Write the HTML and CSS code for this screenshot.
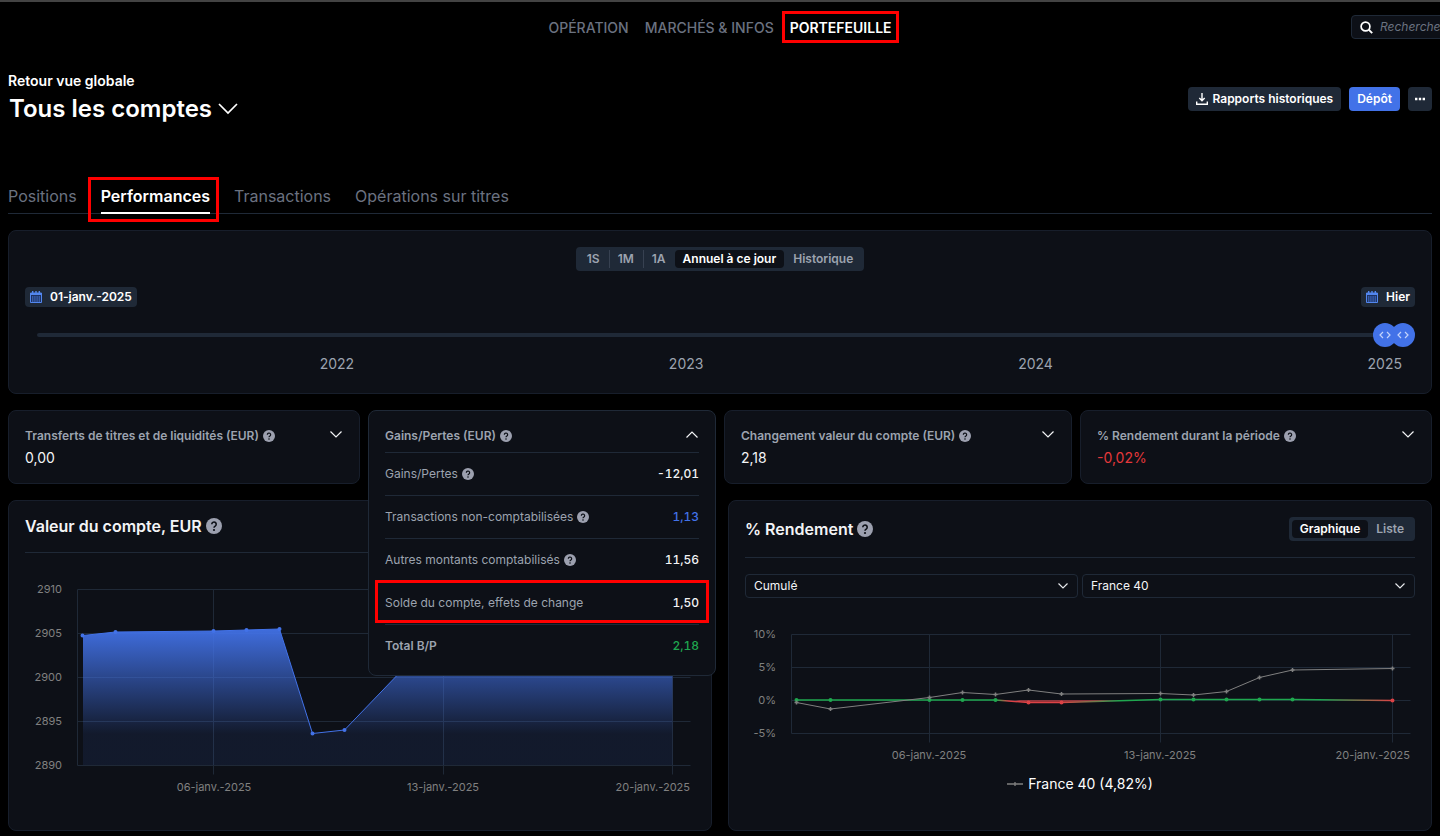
FILE: index.html
```html
<!DOCTYPE html>
<html lang="fr">
<head>
    <meta charset="UTF-8">
    <meta name="viewport" content="width=device-width, initial-scale=1">
    <title>Portefeuille - Performances</title>
    <link rel="stylesheet" href="styles.css">
</head>
<body>
<!-- icônes -->
<svg class="sprite" aria-hidden="true">
    <symbol id="i-help" viewBox="0 0 16 16">
        <circle cx="8" cy="8" r="8" fill="#9ca0af"/>
        <path d="M5.8 6.3a2.2 2.2 0 1 1 3.4 1.8c-.8.5-1.2.8-1.2 1.7" fill="none" stroke="#0d1017" stroke-width="1.6"/>
        <circle cx="8" cy="12" r="1.1" fill="#0d1017"/>
    </symbol>
    <symbol id="i-down" viewBox="0 0 12 7">
        <path d="M.5.5 6 6 11.5.5" fill="none" stroke="currentColor" stroke-width="1.2"/>
    </symbol>
    <symbol id="i-up" viewBox="0 0 12 7">
        <path d="M.5 6.5 6 1l5.5 5.5" fill="none" stroke="currentColor" stroke-width="1.2"/>
    </symbol>
    <symbol id="i-calendar" viewBox="0 0 12 12">
        <path d="M.5 2h11v9.5H.5z" fill="#1d3263" stroke="#5286ee"/>
        <path d="M0 2h12v2H0zM2 0h1.4v3H2zM5.3 0h1.4v3H5.3zM8.6 0H10v3H8.6z" fill="#5286ee"/>
        <path d="M2 6h8M2 8h8M2 10h8" stroke="#5286ee" stroke-width="1.2" stroke-dasharray="1.4 .8"/>
    </symbol>
</svg>

<header class="topbar">
    <nav class="mainnav">
        <a href="#">OPÉRATION</a>
        <a href="#">MARCHÉS &amp; INFOS</a>
        <a href="#" class="active marked">PORTEFEUILLE</a>
    </nav>
    <label class="search">
        <svg width="13" height="13" viewBox="0 0 13 13"><circle cx="5.5" cy="5.5" r="4.4" fill="none" stroke="#fff" stroke-width="1.7"/><path d="m8.7 8.7 3.5 3.5" stroke="#fff" stroke-width="1.9"/></svg>
        <input type="search" placeholder="Rechercher" aria-label="Rechercher">
    </label>
</header>

<main class="page">
    <div class="heading">
        <div>
            <a href="#" class="back">Retour vue globale</a>
            <h1><button type="button" class="account">Tous les comptes <svg width="20" height="12" viewBox="0 0 20 12"><path d="m1 1 9 9 9-9" fill="none" stroke="#fff" stroke-width="1.7"/></svg></button></h1>
        </div>
        <div class="actions">
            <button type="button" class="btn">
                <svg width="12" height="12" viewBox="0 0 12 12"><path d="M6 0v7.5M3.3 5 6 7.7 8.7 5M.7 8.5v2.8h10.6V8.5" fill="none" stroke="#fff" stroke-width="1.4"/></svg>
                Rapports historiques
            </button>
            <button type="button" class="btn primary">Dépôt</button>
            <button type="button" class="btn more" aria-label="Plus">
                <svg width="10" height="4" viewBox="0 0 10 4"><path d="M0 .8h2.4v2.4H0zM3.8.8h2.4v2.4H3.8zM7.6.8H10v2.4H7.6z" fill="#fff"/></svg>
            </button>
        </div>
    </div>

    <nav class="tabs">
        <a href="#">Positions</a>
        <a href="#" class="active marked">Performances</a>
        <a href="#">Transactions</a>
        <a href="#">Opérations sur titres</a>
    </nav>

    <!-- période -->
    <section class="card period">
        <div class="segmented durations">
            <button type="button">1S</button>
            <button type="button">1M</button>
            <button type="button">1A</button>
            <button type="button" class="on">Annuel à ce jour</button>
            <button type="button">Historique</button>
        </div>
        <div class="dates">
            <button type="button" class="date"><svg width="12" height="12"><use href="#i-calendar"/></svg>01-janv.-2025</button>
            <button type="button" class="date"><svg width="12" height="12"><use href="#i-calendar"/></svg>Hier</button>
        </div>
        <div class="range">
            <span class="track"></span>
            <input type="range" min="0" max="100" step="0.1" value="98.7" aria-label="Début">
            <input type="range" min="0" max="100" step="0.1" value="100" aria-label="Fin">
        </div>
        <div class="years"><span>2022</span><span>2023</span><span>2024</span><span>2025</span></div>
    </section>

    <!-- résumé -->
    <section class="summary">
        <div class="card stat">
            <div class="stat-head">
                <h3>Transferts de titres et de liquidités (EUR)</h3>
                <button type="button" class="help" aria-label="Aide"><svg width="12" height="12"><use href="#i-help"/></svg></button>
                <button type="button" class="toggle" aria-label="Ouvrir"><svg width="12" height="7"><use href="#i-down"/></svg></button>
            </div>
            <p class="value">0,00</p>
        </div>
        <div class="slot">
            <div class="card stat open">
                <div class="stat-head">
                    <h3>Gains/Pertes (EUR)</h3>
                    <button type="button" class="help" aria-label="Aide"><svg width="12" height="12"><use href="#i-help"/></svg></button>
                    <button type="button" class="toggle" aria-label="Fermer"><svg width="12" height="7"><use href="#i-up"/></svg></button>
                </div>
                <dl class="details">
                    <div>
                        <dt>Gains/Pertes</dt>
                        <button type="button" class="help" aria-label="Aide"><svg width="12" height="12"><use href="#i-help"/></svg></button>
                        <dd>-12,01</dd>
                    </div>
                    <div>
                        <dt>Transactions non-comptabilisées</dt>
                        <button type="button" class="help" aria-label="Aide"><svg width="12" height="12"><use href="#i-help"/></svg></button>
                        <dd class="blue">1,13</dd>
                    </div>
                    <div>
                        <dt>Autres montants comptabilisés</dt>
                        <button type="button" class="help" aria-label="Aide"><svg width="12" height="12"><use href="#i-help"/></svg></button>
                        <dd>11,56</dd>
                    </div>
                    <div class="marked">
                        <dt>Solde du compte, effets de change</dt>
                        <dd>1,50</dd>
                    </div>
                    <div class="total">
                        <dt>Total B/P</dt>
                        <dd class="green">2,18</dd>
                    </div>
                </dl>
            </div>
        </div>
        <div class="card stat">
            <div class="stat-head">
                <h3>Changement valeur du compte (EUR)</h3>
                <button type="button" class="help" aria-label="Aide"><svg width="12" height="12"><use href="#i-help"/></svg></button>
                <button type="button" class="toggle" aria-label="Ouvrir"><svg width="12" height="7"><use href="#i-down"/></svg></button>
            </div>
            <p class="value">2,18</p>
        </div>
        <div class="card stat">
            <div class="stat-head">
                <h3>% Rendement durant la période</h3>
                <button type="button" class="help" aria-label="Aide"><svg width="12" height="12"><use href="#i-help"/></svg></button>
                <button type="button" class="toggle" aria-label="Ouvrir"><svg width="12" height="7"><use href="#i-down"/></svg></button>
            </div>
            <p class="value red">-0,02%</p>
        </div>
    </section>

    <!-- graphiques -->
    <section class="charts">
        <div class="card chart">
            <div class="chart-head short">
                <h2>Valeur du compte, EUR</h2>
                <button type="button" class="help" aria-label="Aide"><svg width="16" height="16"><use href="#i-help"/></svg></button>
            </div>
            <svg class="plot" viewBox="0 0 670 247" role="img" aria-label="Valeur du compte">
                <defs>
                    <linearGradient id="fill" gradientUnits="userSpaceOnUse" x1="0" y1="76" x2="0" y2="181">
                        <stop offset="0" stop-color="#4272e8" stop-opacity=".95"/>
                        <stop offset="1" stop-color="#4272e8" stop-opacity=".1"/>
                    </linearGradient>
                </defs>
                <path class="grid" d="M52.5 36.5h613M52.5 80.5h613M52.5 124.5h613M52.5 168.5h613M52.5 212.5h613M52.5 36.5v176M188.5 36.5v185M418.5 36.5v185M647.5 36.5v185"/>
                <path d="M58 82.5 90.5 79 188.5 78 221.5 77 254.5 76 287.5 180.5 319.5 177 418.5 74 647.5 76V212H58z" fill="url(#fill)"/>
                <path class="value-line" d="M58 82.5 90.5 79 188.5 78 221.5 77 254.5 76 287.5 180.5 319.5 177 418.5 74 647.5 76"/>
                <path class="value-dots" d="M57.5 82.5h0M90.5 79h0M188.5 78h0M221.5 77h0M254.5 76h0M287.5 180.5h0M319.5 177h0"/>
                <g class="axis end">
                    <text x="37" y="40">2910</text>
                    <text x="37" y="84">2905</text>
                    <text x="37" y="128">2900</text>
                    <text x="37" y="172">2895</text>
                    <text x="37" y="216">2890</text>
                    <text x="665" y="238">20-janv.-2025</text>
                </g>
                <g class="axis middle">
                    <text x="189" y="238">06-janv.-2025</text>
                    <text x="418" y="238">13-janv.-2025</text>
                </g>
            </svg>
        </div>

        <div class="card chart">
            <div class="chart-head">
                <h2>% Rendement</h2>
                <button type="button" class="help" aria-label="Aide"><svg width="16" height="16"><use href="#i-help"/></svg></button>
                <div class="segmented">
                    <button type="button" class="on">Graphique</button>
                    <button type="button">Liste</button>
                </div>
            </div>
            <div class="selects">
                <select aria-label="Type"><option>Cumulé</option></select>
                <select aria-label="Indice"><option>France 40</option></select>
            </div>
            <svg class="plot" viewBox="0 0 670 168" role="img" aria-label="Rendement">
                <defs>
                    <linearGradient id="to-red"><stop offset="0" stop-color="#1fa74f"/><stop offset=".4" stop-color="#dc4246"/></linearGradient>
                    <linearGradient id="to-green"><stop offset="0" stop-color="#dc4246"/><stop offset=".6" stop-color="#1fa74f"/></linearGradient>
                    <linearGradient id="late-red"><stop offset=".3" stop-color="#1fa74f"/><stop offset="1" stop-color="#dc4246"/></linearGradient>
                </defs>
                <path class="grid" d="M46.5 36.5h619M46.5 69.5h619M46.5 102.5h619M46.5 135.5h619M46.5 36.5v99M184.5 36.5v108M415.5 36.5v108M647.5 36.5v108"/>
                <path class="gain" d="M51.5 102h199M415.5 101.5h132"/>
                <path d="M250 102h20l13 3h33l60-3z" fill="#dc4246" opacity=".6"/>
                <path d="M250.5 102 283.5 104.5" stroke="url(#to-red)" stroke-width="1.5"/>
                <path class="loss" d="M283.5 104.5h33"/>
                <path d="M316.5 104.5 415.5 101.5" stroke="url(#to-green)" stroke-width="1.5"/>
                <path d="M547.5 101.5 647.5 102.5" stroke="url(#late-red)" stroke-width="1.5"/>
                <path class="gain-dots" d="M51.5 102h0M85.5 102h0M184.5 102h0M217.5 102h0M250.5 102h0M415.5 101.5h0M448.5 101.5h0M481.5 101.5h0M514.5 101.5h0M547.5 101.5h0"/>
                <path class="loss-dots" d="M283.5 104.5h0M316.5 104.5h0M647.5 102.5h0"/>
                <path class="index" d="M51.5 104.5 85.5 111 184.5 99.5 217.5 94.5 250.5 96.5 283.5 92 316.5 96 415.5 95.5 448.5 97 481.5 93.5 514.5 79.5 547.5 72 647.5 70.5"/>
                <path class="index points" d="M49.5 104.5h4m-2-2v4M83.5 111h4m-2-2v4M182.5 99.5h4m-2-2v4M215.5 94.5h4m-2-2v4M248.5 96.5h4m-2-2v4M281.5 92h4m-2-2v4M314.5 96h4m-2-2v4M413.5 95.5h4m-2-2v4M446.5 97h4m-2-2v4M479.5 93.5h4m-2-2v4M512.5 79.5h4m-2-2v4M545.5 72h4m-2-2v4M645.5 70.5h4m-2-2v4"/>
                <g class="axis end">
                    <text x="31" y="40">10%</text>
                    <text x="31" y="73">5%</text>
                    <text x="31" y="106">0%</text>
                    <text x="31" y="139">-5%</text>
                    <text x="665" y="161">20-janv.-2025</text>
                </g>
                <g class="axis middle">
                    <text x="184" y="161">06-janv.-2025</text>
                    <text x="415" y="161">13-janv.-2025</text>
                </g>
            </svg>
            <p class="legend">
                <svg width="16" height="6" viewBox="0 0 16 6"><path d="M0 3h16M6 3h4M8 1v4" stroke="#808080" stroke-width="1.3"/></svg>
                France 40 (4,82%)
            </p>
        </div>
    </section>
</main>
</body>
</html>
```
FILE: styles.css
```css
* {
    box-sizing: border-box;
}

body {
    margin: 0;
    border-top: 2px solid #434343;
    background: #000;
    color: #f3f4f6;
    font-family: Inter, "Liberation Sans", sans-serif;
    font-size: 12px;
    line-height: 18px;
}

h1, h2, h3, p, dl, dd {
    margin: 0;
}

a {
    color: inherit;
    text-decoration: none;
}

button, input, select {
    margin: 0;
    padding: 0;
    border: 0;
    background: none;
    color: inherit;
    font: inherit;
}

button {
    display: inline-flex;
    align-items: center;
    justify-content: center;
    cursor: pointer;
}

svg {
    display: block;
    flex: none;
}

.sprite {
    position: absolute;
    width: 0;
    height: 0;
}

/* cadre rouge */
.marked {
    position: relative;
}

.marked::before {
    content: "";
    position: absolute;
    inset: -8px -7px -6px -8px;
    border: 3px solid #f00;
    pointer-events: none;
}

/* barre du haut */
.topbar {
    display: grid;
    grid-template-columns: 1fr auto 1fr;
    align-items: center;
    height: 50px;
    overflow: hidden;
}

.mainnav {
    display: flex;
    grid-column: 2;
    gap: 16px;
    padding-top: 2px;
    color: #6b7280;
    font-size: 14px;
    font-weight: 500;
}

.mainnav .active {
    color: #fff;
    font-weight: 600;
}

.search {
    display: flex;
    align-items: center;
    justify-self: end;
    gap: 7px;
    width: 160px;
    height: 24px;
    margin-right: -71px;
    padding-left: 8px;
    border: 1px solid #1f2937;
    border-radius: 4px;
    background: #0d1017;
}

.search input {
    width: 110px;
    outline: 0;
}

.search input::placeholder {
    color: #6b7280;
    font-style: italic;
}

.page {
    padding: 0 8px 5px;
}

/* titre */
.heading {
    display: flex;
    justify-content: space-between;
    padding-top: 20px;
}

.back {
    display: block;
    font-size: 14px;
    font-weight: 600;
    color: #fff;
}

h1 {
    padding-top: 1px;
    line-height: 36px;
}

.account {
    gap: 6px;
    padding-left: 1px;
    color: #fff;
    font-size: 24px;
    font-weight: 600;
    line-height: 36px;
}

.actions {
    display: flex;
    gap: 8px;
    padding-top: 15px;
}

.btn {
    gap: 4px;
    height: 24px;
    padding: 0 8px;
    border-radius: 4px;
    background: #1f2937;
    color: #fff;
    font-weight: 600;
}

.btn.primary {
    background: #4272e8;
}

.btn.more {
    width: 24px;
    padding: 0;
}

/* onglets */
.tabs {
    display: flex;
    gap: 24px;
    margin-top: 56px;
    border-bottom: 1px solid #1f2937;
    color: #6b7280;
    font-size: 16px;
    line-height: 26px;
}

.tabs a {
    padding-bottom: 3px;
}

.tabs .active {
    margin-bottom: -1px;
    border-bottom: 2px solid #fff;
    color: #fff;
    font-weight: 600;
}

.tabs .marked::before {
    inset: -6px -9px -10px -13px;
}

.card {
    border: 1px solid #171e2b;
    border-radius: 8px;
    background: #0d1017;
}

/* periode */
.period {
    display: flex;
    flex-direction: column;
    margin-top: 16px;
    padding: 16px 16px 20px;
}

.segmented {
    display: flex;
    align-self: center;
    align-items: center;
    height: 24px;
    padding: 3px;
    border-radius: 4px;
    background: #1f2937;
    color: #9ca3af;
    font-weight: 600;
}

.segmented button {
    height: 18px;
    padding: 0 8px;
}

.segmented .on {
    border-radius: 4px;
    background: #0d1017;
    color: #fff;
}

.durations {
    gap: 1px;
}

.durations button:nth-child(2),
.durations button:nth-child(3) {
    border-left: 1px solid #374151;
}

.dates {
    display: flex;
    justify-content: space-between;
    margin-top: 16px;
}

.date {
    gap: 8px;
    height: 20px;
    padding: 0 5px;
    border-radius: 4px;
    background: #1f2937;
    color: #fff;
    font-weight: 600;
}

.range {
    display: grid;
    align-items: center;
    margin-top: 16px;
}

.range > * {
    grid-area: 1 / 1;
}

.track {
    height: 4px;
    margin: 0 12px;
    border-radius: 2px;
    background: #1f2937;
}

.range input {
    width: 100%;
    height: 24px;
    appearance: none;
    pointer-events: none;
}

.range input::-webkit-slider-thumb {
    width: 24px;
    height: 24px;
    border-radius: 50%;
    background: #4272e8 url("data:image/svg+xml,%3Csvg xmlns='http://www.w3.org/2000/svg' width='12' height='8'%3E%3Cpath d='M4 1 1 4l3 3M8 1l3 3-3 3' fill='none' stroke='%23c3d3fb' stroke-width='1.2'/%3E%3C/svg%3E") center no-repeat;
    appearance: none;
    pointer-events: auto;
}

.years {
    display: flex;
    justify-content: space-between;
    margin-top: 8px;
    padding: 0 13px 0 21.2%;
    color: #9ca3af;
    font-size: 14px;
}

/* resume */
.summary {
    display: grid;
    grid-template-columns: 352fr 348fr 348fr 352fr;
    gap: 8px;
    margin-top: 16px;
}

.stat {
    padding: 16px 16px 15px;
}

.stat-head {
    display: flex;
    align-items: center;
    gap: 4px;
}

h3 {
    color: #9ca3af;
    font-size: 12px;
    font-weight: 600;
    line-height: 18px;
}

.toggle {
    width: 14px;
    margin-left: auto;
    padding-bottom: 3px;
}

.value {
    margin-top: 3px;
    font-size: 14px;
    line-height: 20px;
}

.red {
    color: #e5383b;
}

.slot {
    position: relative;
}

/* panneau ouvert par dessus les graphiques */
.open {
    position: absolute;
    z-index: 2;
    top: 0;
    right: 0;
    left: 0;
    padding-bottom: 8px;
    border-color: #1f2937;
}

.details {
    margin-top: 7px;
    color: #9ca3af;
}

.details > div {
    display: flex;
    align-items: center;
    gap: 4px;
    height: 43px;
    border-top: 1px solid #1f2937;
}

.details dd {
    margin-left: auto;
    color: #f3f4f6;
    font-variant-numeric: tabular-nums;
    font-weight: 500;
}

.details .marked::before {
    inset: -2px -10px 1px;
}

.details .total dt {
    font-weight: 600;
}

.details .blue {
    color: #4272e8;
}

.details .green {
    color: #1fa74f;
}

/* graphiques */
.charts {
    display: grid;
    grid-template-columns: 1fr 1fr;
    gap: 16px;
    margin-top: 16px;
}

.chart {
    padding: 0 16px;
}

.chart-head {
    display: flex;
    align-items: center;
    gap: 4px;
    height: 57px;
    border-bottom: 1px solid #1f2937;
}

.chart-head.short {
    height: 52px;
    padding-bottom: 2px;
}

.chart-head .segmented {
    margin-left: auto;
}

h2 {
    font-size: 16px;
    font-weight: 600;
    line-height: 24px;
}

.plot {
    width: 100%;
    height: auto;
}

.grid {
    fill: none;
    stroke: #1f2937;
}

.axis {
    fill: #808080;
    font-size: 11px;
}

.axis.end {
    text-anchor: end;
}

.axis.middle {
    text-anchor: middle;
}

.value-line {
    fill: none;
    stroke: #4272e8;
}

.value-dots {
    stroke: #4272e8;
    stroke-width: 4;
    stroke-linecap: round;
}

.gain, .gain-dots {
    stroke: #1fa74f;
    stroke-width: 1.5;
}

.loss, .loss-dots {
    stroke: #dc4246;
    stroke-width: 1.5;
}

.gain-dots, .loss-dots {
    stroke-width: 4;
    stroke-linecap: round;
}

.index {
    fill: none;
    stroke: #808080;
}

.index.points {
    stroke-width: 1.5;
}

.selects {
    display: grid;
    grid-template-columns: 1fr 1fr;
    gap: 4px;
    margin-top: 16px;
}

select {
    height: 24px;
    padding: 0 8px;
    border: 1px solid #1f2937;
    border-radius: 4px;
    background: url("data:image/svg+xml,%3Csvg xmlns='http://www.w3.org/2000/svg' width='10' height='6'%3E%3Cpath d='M.5.5 5 5 9.5.5' fill='none' stroke='%23e5e7eb' stroke-width='1.2'/%3E%3C/svg%3E") right 9px center no-repeat;
    appearance: none;
}

select option {
    background: #0d1017;
}

.legend {
    display: flex;
    align-items: center;
    justify-content: center;
    gap: 5px;
    padding: 9px 0 37px;
    color: #fff;
    font-size: 14px;
}
```
